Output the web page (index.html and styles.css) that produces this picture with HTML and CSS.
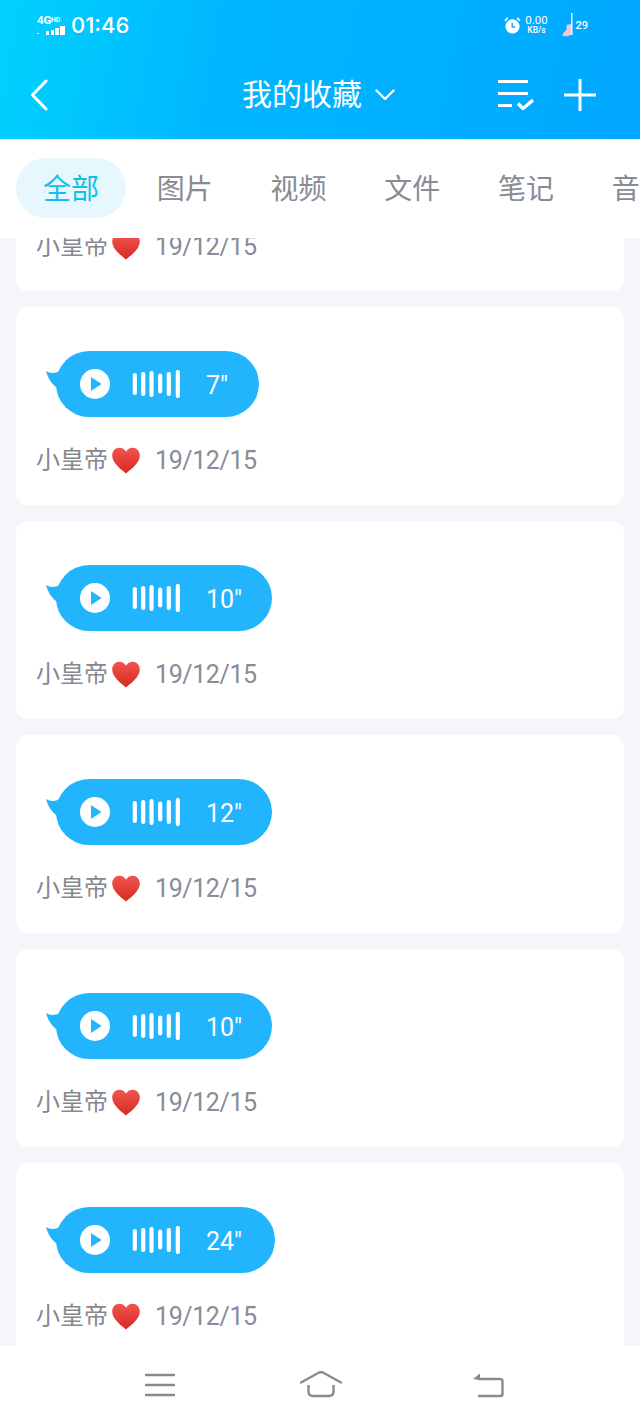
FILE: index.html
```html
<!DOCTYPE html>
<html lang="zh">
<head>
<meta charset="utf-8">
<title>我的收藏</title>
<link rel="stylesheet" href="styles.css">
</head>
<body>
<svg class="defs" width="0" height="0" aria-hidden="true">
  <defs>
    <linearGradient id="heart-fill" x1="0" y1="0" x2="0" y2="1">
      <stop offset="0" stop-color="#f0544f"/>
      <stop offset="1" stop-color="#d62a20"/>
    </linearGradient>
    <symbol id="heart" viewBox="0 0 30 28">
      <path fill="url(#heart-fill)" d="M15 27.500C9 22.500 1 17 .7 9.200.5 4.300 4 .8 8.200 .8 11 .8 13.500 2.200 15 5 16.500 2.200 19 .8 21.800 .8 26 .8 29.500 4.300 29.300 9.200 29 17 21 22.500 15 27.500Z"/>
    </symbol>
    <symbol id="bubble-tail" viewBox="0 0 14 20">
      <path d="M0 1C4 3.500 9 3.500 14 1V18L10 17C5 13 2 8 0 1Z"/>
    </symbol>
    <symbol id="play" viewBox="0 0 30 30">
      <circle cx="15" cy="15" r="15" fill="#fff"/>
      <path d="M11 8 21.500 15 11 22Z" fill="#22b4fc"/>
    </symbol>
    <symbol id="wave" viewBox="0 0 50 28">
      <path d="M2.800 5V23M11.200 4V24M19.500 3V25M28.200 5.500V21.500M36.800 4V24M45.800 2V26" fill="none" stroke="#fff" stroke-width="4.200" stroke-linecap="round"/>
    </symbol>
  </defs>
</svg>

<header class="top">
  <div class="status">
    <div class="status-left">
      <div class="net">
        <span class="net-label">4G<small>HD</small></span>
        <svg class="signal" viewBox="0 0 28 9" width="28" height="9">
          <path d="M0 7h2v1H0zM9 5h3v4H9zM14 4h3v5h-3zM18 2h4v7h-4zM23 0h5v9h-5z" fill="#fff"/>
        </svg>
      </div>
      <span class="clock">01:46</span>
    </div>
    <div class="status-right">
      <svg class="alarm" viewBox="0 0 18 18" width="17" height="17">
        <circle cx="9" cy="10" r="7.500" fill="#fff"/>
        <path d="M1 4 4 1M17 4 14 1" stroke="#fff" stroke-width="1.800" fill="none"/>
        <path d="M8.700 6v4.500h3.300" stroke="#13a9f6" stroke-width="1.500" fill="none"/>
      </svg>
      <div class="speed"><span class="speed-num">0.00</span><span class="speed-unit">KB/s</span></div>
      <div class="batt">
        <svg class="batt-icon" viewBox="0 0 12 24" width="12" height="24">
          <path d="M9 0h1.500v22H9z" fill="#f4f0f4"/>
          <path d="M4.500 12 9 11v10.500C7 23.500 2 24 .5 22.500c-.5-2 3-4 4-6Z" fill="#f2c8d6"/>
        </svg>
        <span class="batt-num">29</span>
      </div>
    </div>
  </div>
  <div class="titlebar">
    <svg class="back" viewBox="0 0 18 32" width="18" height="32">
      <path d="M16 2 2.500 16 16 30" fill="none" stroke="#fff" stroke-width="3" stroke-linecap="round" stroke-linejoin="round"/>
    </svg>
    <div class="title">
      <h1>我的收藏</h1>
      <svg viewBox="0 0 20 12" width="20" height="12">
        <path d="M1.500 1.500 10 10 18.500 1.500" fill="none" stroke="#fff" stroke-width="2.400" stroke-linecap="round" stroke-linejoin="round"/>
      </svg>
    </div>
    <div class="actions">
      <svg viewBox="0 0 36 32" width="36" height="32">
        <path d="M0 2.500H30M0 14.500H30M0 26.500H14" fill="none" stroke="#fff" stroke-width="3"/>
        <path d="M20 24.500 25 29.500 35 21" fill="none" stroke="#fff" stroke-width="3.400" stroke-linejoin="round"/>
      </svg>
      <svg viewBox="0 0 32 32" width="32" height="32">
        <path d="M16 0V32M0 16H32" fill="none" stroke="#fff" stroke-width="3"/>
      </svg>
    </div>
  </div>
</header>

<nav class="tabs">
  <span class="tab active">全部</span>
  <span class="tab">图片</span>
  <span class="tab">视频</span>
  <span class="tab">文件</span>
  <span class="tab">笔记</span>
  <span class="tab">音频</span>
</nav>

<main class="list">
  <article class="card card-first">
    <div class="voice w-7"><svg class="tail"><use href="#bubble-tail"/></svg><svg class="play"><use href="#play"/></svg><svg class="wave"><use href="#wave"/></svg><span class="secs">5"</span></div>
    <div class="meta"><span class="name">小皇帝</span><svg class="heart"><use href="#heart"/></svg><span class="date">19/12/15</span></div>
  </article>
  <article class="card">
    <div class="voice w-7"><svg class="tail"><use href="#bubble-tail"/></svg><svg class="play"><use href="#play"/></svg><svg class="wave"><use href="#wave"/></svg><span class="secs">7"</span></div>
    <div class="meta"><span class="name">小皇帝</span><svg class="heart"><use href="#heart"/></svg><span class="date">19/12/15</span></div>
  </article>
  <article class="card">
    <div class="voice w-10"><svg class="tail"><use href="#bubble-tail"/></svg><svg class="play"><use href="#play"/></svg><svg class="wave"><use href="#wave"/></svg><span class="secs">10"</span></div>
    <div class="meta"><span class="name">小皇帝</span><svg class="heart"><use href="#heart"/></svg><span class="date">19/12/15</span></div>
  </article>
  <article class="card">
    <div class="voice w-10"><svg class="tail"><use href="#bubble-tail"/></svg><svg class="play"><use href="#play"/></svg><svg class="wave"><use href="#wave"/></svg><span class="secs">12"</span></div>
    <div class="meta"><span class="name">小皇帝</span><svg class="heart"><use href="#heart"/></svg><span class="date">19/12/15</span></div>
  </article>
  <article class="card">
    <div class="voice w-10"><svg class="tail"><use href="#bubble-tail"/></svg><svg class="play"><use href="#play"/></svg><svg class="wave"><use href="#wave"/></svg><span class="secs">10"</span></div>
    <div class="meta"><span class="name">小皇帝</span><svg class="heart"><use href="#heart"/></svg><span class="date">19/12/15</span></div>
  </article>
  <article class="card">
    <div class="voice w-24"><svg class="tail"><use href="#bubble-tail"/></svg><svg class="play"><use href="#play"/></svg><svg class="wave"><use href="#wave"/></svg><span class="secs">24"</span></div>
    <div class="meta"><span class="name">小皇帝</span><svg class="heart"><use href="#heart"/></svg><span class="date">19/12/15</span></div>
  </article>
</main>

<footer class="navbar">
  <svg viewBox="0 0 30 24" width="30" height="24">
    <path d="M0 2H30M0 12H30M0 22H30" fill="none" stroke="#8a8a8c" stroke-width="2.400"/>
  </svg>
  <svg viewBox="0 0 48 28" width="48" height="28">
    <path d="M1 11.500 19 1.500Q21 .8 23 1.500L41 11.500" fill="none" stroke="#8a8a8c" stroke-width="2.400" stroke-linecap="round"/>
    <path d="M8.500 14V20.500Q8.500 25 13 25H29Q33.500 25 33.500 20.500V14" fill="none" stroke="#8a8a8c" stroke-width="2.400"/>
  </svg>
  <svg viewBox="0 0 31 26" width="31" height="26">
    <path d="M5 7H27Q29.500 7 29.500 9.500V22Q29.500 24 27.500 24H5" fill="none" stroke="#8a8a8c" stroke-width="2.400"/>
    <path d="M0 7 7 1.500V8Z" fill="#8a8a8c"/>
  </svg>
</footer>
</body>
</html>
```

FILE: styles.css
```css
* {
  box-sizing: border-box;
}

html,
body {
  margin: 0;
  height: 100%;
}

body {
  display: flex;
  flex-direction: column;
  height: 1422px;
  overflow: hidden;
  background: #f4f6fa;
  font-family: Roboto, "Noto Sans CJK SC", sans-serif;
}

.defs {
  position: absolute;
}

.top {
  flex: none;
  height: 139px;
  background: linear-gradient(100deg, #00d2fd 0%, #00b6ff 35%, #00a8ff 100%);
  color: #fff;
}

.status {
  height: 50px;
  padding: 0 52px 0 37px;
  display: flex;
  align-items: center;
  justify-content: space-between;
}

.status-left,
.status-right {
  display: flex;
  align-items: center;
}

.net {
  width: 34px;
  display: flex;
  flex-direction: column;
}

.net-label {
  font-size: 11.500px;
  line-height: 9px;
  font-weight: 700;
  letter-spacing: -.2px;
  white-space: nowrap;
}

.net-label small {
  font-size: 7px;
  vertical-align: 2px;
}

.signal {
  display: block;
  margin-top: 1px;
}

.clock {
  font-size: 22px;
  line-height: 26px;
  font-weight: 500;
  font-family: Inter, Roboto, sans-serif;
}

.alarm {
  margin-right: 1px;
}

.speed {
  width: 28px;
  display: flex;
  flex-direction: column;
  align-items: center;
}

.speed-num {
  font-size: 11.500px;
  line-height: 11px;
}

.speed-unit {
  font-size: 8.500px;
  line-height: 9px;
  font-weight: 500;
}

.batt {
  display: flex;
  align-items: center;
  gap: 1px;
  margin-left: 12px;
}

.batt-num {
  font-size: 11px;
  font-weight: 500;
}

.titlebar {
  height: 89px;
  padding: 0 44px 0 30px;
  display: grid;
  grid-template-columns: 1fr auto 1fr;
  align-items: center;
}

.title {
  display: flex;
  align-items: center;
  gap: 13px;
  margin-left: 11px;
}

.title h1 {
  margin: 0;
  font-size: 30px;
  font-weight: 400;
  line-height: 40px;
}

.actions {
  justify-self: end;
  display: flex;
  align-items: center;
  gap: 30px;
}

.tabs {
  flex: none;
  height: 99px;
  background: #fff;
  padding: 19px 0 20px 16px;
  display: flex;
  gap: 3.750px;
  overflow: hidden;
  position: relative;
  z-index: 1;
}

.tab {
  flex: none;
  width: 110px;
  height: 60px;
  padding-top: 4px;
  border-radius: 30px;
  font-size: 28px;
  line-height: 56px;
  text-align: center;
  color: #888b93;
}

.tab.active {
  background: #e6f8fd;
  color: #13bfe9;
}

.list {
  flex: 1;
  min-height: 0;
  overflow: hidden;
  padding: 0 16px;
  display: flex;
  flex-direction: column;
  gap: 16px;
}

.card {
  flex: none;
  height: 198px;
  background: #fff;
  border-radius: 12px;
  padding: 44px 0 0 40px;
}

.card-first {
  margin-top: -145px;
}

.voice {
  position: relative;
  height: 66px;
  border-radius: 33px;
  background: #22b4fc;
  display: flex;
  align-items: center;
  padding-left: 24px;
  color: #fff;
}

.w-7 {
  width: 203px;
}

.w-10 {
  width: 216px;
}

.w-24 {
  width: 219px;
}

.tail {
  position: absolute;
  left: -10px;
  top: 19px;
  width: 14px;
  height: 20px;
  fill: #22b4fc;
}

.play {
  width: 30px;
  height: 30px;
  flex: none;
}

.wave {
  width: 50px;
  height: 28px;
  flex: none;
  margin-left: 22px;
}

.secs {
  margin: 4px 0 0 24px;
  font-size: 25px;
  line-height: 30px;
}

.meta {
  margin: 27px 0 0 -20px;
  height: 32px;
  display: flex;
  align-items: center;
  color: #85888f;
}

.name {
  font-size: 24px;
  line-height: 32px;
}

.heart {
  width: 30px;
  height: 27px;
  margin: 1px 0 0 3px;
}

.date {
  margin: 2px 0 0 14px;
  font-size: 25px;
  line-height: 32px;
  letter-spacing: -.4px;
  color: #888c95;
}

.navbar {
  flex: none;
  height: 76px;
  background: #fff;
  padding: 2px 0 0 145px;
  display: flex;
  align-items: center;
  gap: 125px;
  position: relative;
  z-index: 1;
}
```
